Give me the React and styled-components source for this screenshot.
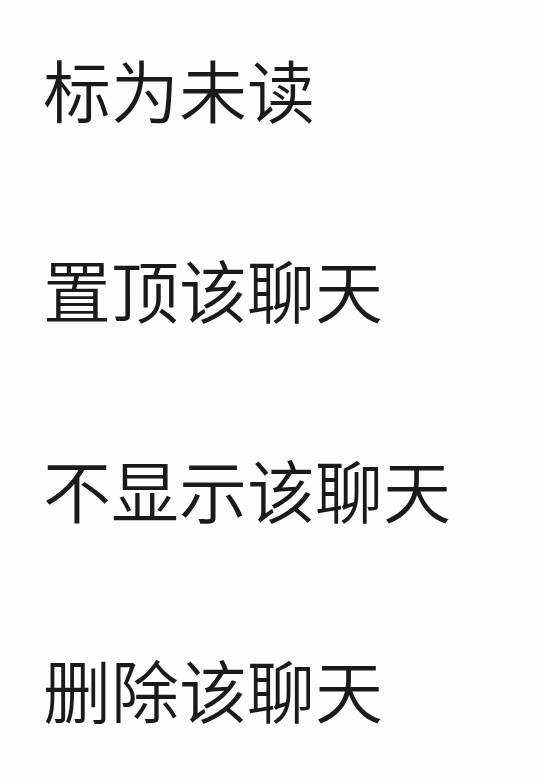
import React from 'react'
import styled, { createGlobalStyle } from 'styled-components'

const items = ['标为未读', '置顶该聊天', '不显示该聊天', '删除该聊天']

const App = () => {
  return (
    <>
      <GlobalStyle />
      <Menu>
        {items.map((item) => (
          <li key={item}>
            <MenuButton type='button'>{item}</MenuButton>
          </li>
        ))}
      </Menu>
    </>
  )
}

const GlobalStyle = createGlobalStyle`
body {
  margin: 0;
  background: #fefefe;
}
`

const Menu = styled.ul`
margin: 0;
padding: 0;
list-style: none;
`

const MenuButton = styled.button`
display: block;
width: 100%;
padding: 39px 43px 61px;
border: none;
background: none;
color: #1a1a1a;
font-family: "Noto Sans CJK SC", sans-serif;
font-size: 68px;
font-weight: 350;
line-height: 100px;
text-align: left;
white-space: nowrap;
cursor: pointer;

&:active {
  background: #ededed;
}
`

export default App
